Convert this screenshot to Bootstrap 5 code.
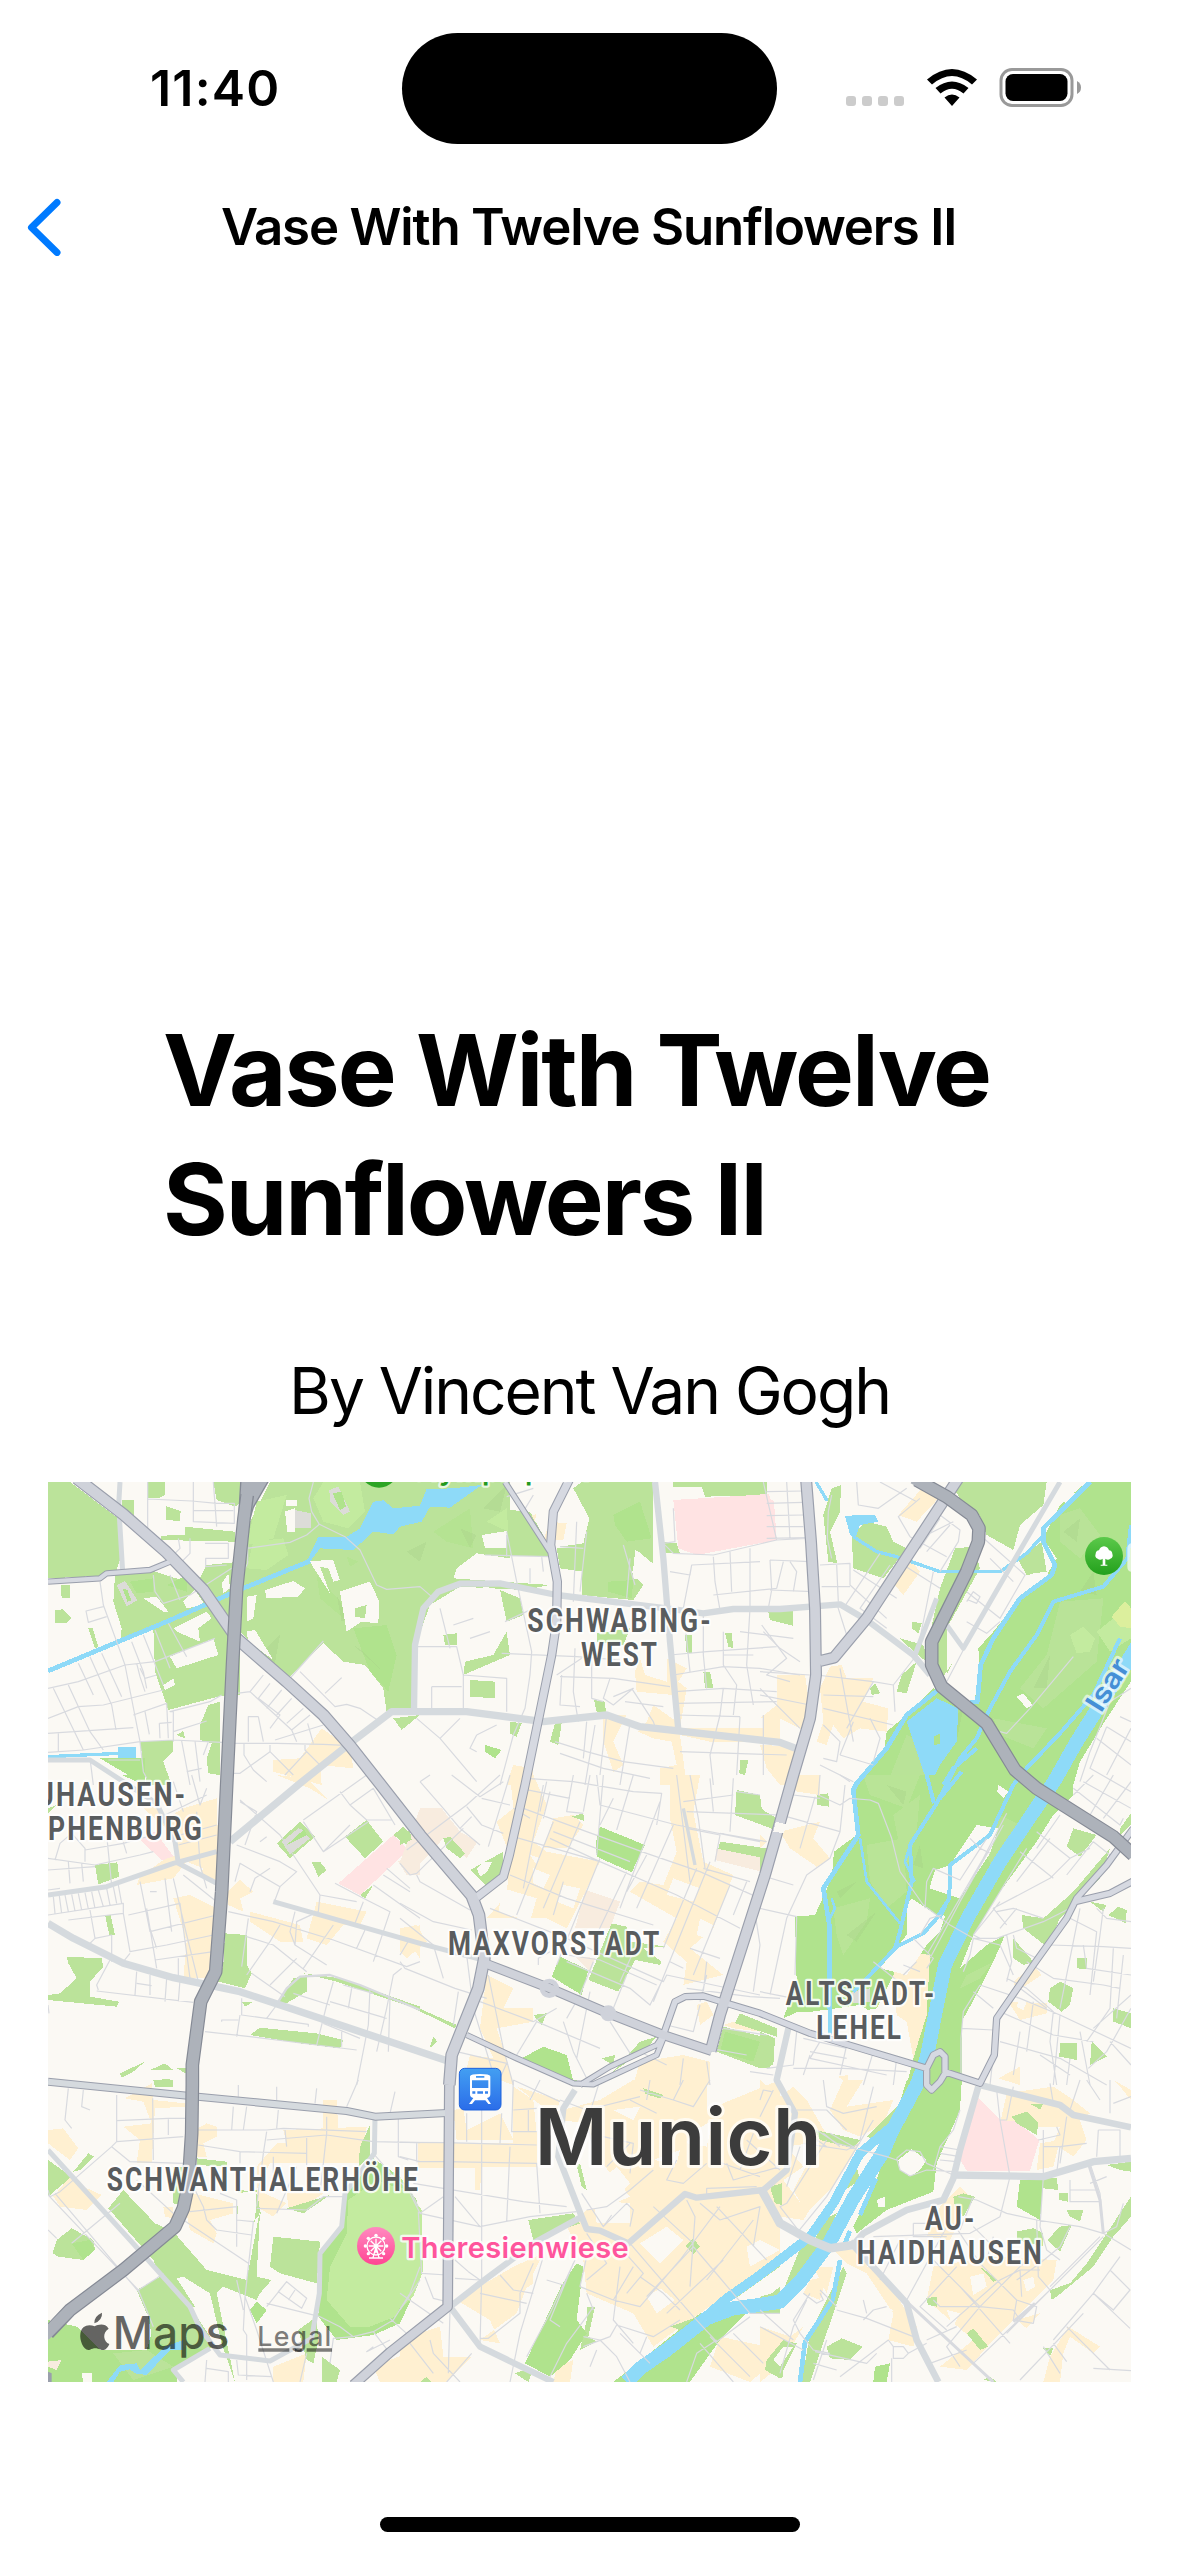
<!DOCTYPE html>
<html lang="en">
<head>
<meta charset="utf-8">
<meta name="viewport" content="width=device-width, initial-scale=1">
<title>Vase With Twelve Sunflowers II</title>
<link href="https://cdn.jsdelivr.net/npm/bootstrap@5.3.0/dist/css/bootstrap.min.css" rel="stylesheet">
<style>
body{font-family:Inter,"Liberation Sans",sans-serif;color:#000;background:#fff}
.screen{width:1179px;height:2556px;overflow:hidden}
.status{height:177px;padding:33px 98px 0 150px}
.clock{font-size:50px;line-height:60px;font-weight:600;letter-spacing:1.2px;width:252px;padding-top:25px}
.island{width:375px;height:111px;border-radius:56px;background:#000}
.status-icons{width:237px;margin-top:35px}
.topbar{height:99px;padding:0 27px}
.back-icon{margin-top:21px}
.topbar h1{font-size:51px;font-weight:600;line-height:60px;letter-spacing:-1.2px;margin:20px 0 0 160px;white-space:nowrap}
.hero{height:730px}
.headline{font-size:99px;font-weight:700;line-height:129px;letter-spacing:-2.1px;margin:0;padding-left:163px}
.byline{font-size:64px;font-weight:400;line-height:80px;letter-spacing:-2.05px;margin-top:87px;height:131px;white-space:nowrap}
.map{width:1083px;height:900px}
.home-bar{width:420px;height:15px;border-radius:8px;background:#000;margin-top:135px}
.area{shape-rendering:crispEdges;stroke:none}
.gr{fill:#bbe39a}.gb{fill:#b0e38d}.gl{fill:#c3eb9f}.ye{fill:#fff0d1}.pk{fill:#ffe3e3}.pe{fill:#f8ecdf}.wh{fill:#fbf9f4}.wt{fill:#8edaf8}.gy{fill:#dcdcd8}
.line{fill:none;stroke-linejoin:round}
.river{stroke:#8edaf8}
.minor{stroke:#d8dadf;stroke-width:3.6}
.sec{stroke:#d5dade}
.case{stroke:#9a9fac}
.prim{stroke:#cfd2da}
.light{stroke:#d6d9e1}
.mcase{stroke:#858a95}
.mway{stroke:#adb2ba}
.lbl{font-family:Roboto,"Liberation Sans",sans-serif;font-size:101px;font-weight:700;letter-spacing:8px;fill:#595c5e;stroke:#fff;stroke-opacity:.85;stroke-width:14px;paint-order:stroke;stroke-linejoin:round}
.inter{font-family:Inter,sans-serif;paint-order:stroke;stroke-linejoin:round}
</style>
<script src="https://cdn.jsdelivr.net/npm/bootstrap@5.3.0/dist/js/bootstrap.bundle.min.js"></script>
</head>
<body>
<main class="screen d-flex flex-column">
<header class="status d-flex align-items-start flex-shrink-0">
<div class="clock">11:40</div>
<div class="island flex-shrink-0"></div>
<svg class="status-icons ms-auto flex-shrink-0" height="42" viewBox="844 68 237 42">
<g fill="#ccc"><rect x="846" y="96" width="10" height="10" rx="3"/><rect x="862" y="96" width="10" height="10" rx="3"/><rect x="878" y="96" width="10" height="10" rx="3"/><rect x="894" y="96" width="10" height="10" rx="3"/></g>
<path d="M927 79.500Q952 58.500 977 79.500L972 84.500Q952 67.500 932 84.500ZM935.500 88Q952 75 968.500 88L963.500 93.500Q952 84 940.500 93.500ZM944.500 97.500Q952 91.500 959.500 97.500L952 106Z"/>
<rect x="1001" y="69.500" width="71" height="36" rx="11" fill="none" stroke="#999" stroke-width="3"/>
<rect x="1005.500" y="74" width="62" height="27" rx="7.500"/>
<path d="M1077 81Q1081 83 1081 87.500Q1081 92 1077 94Z" fill="#999"/>
</svg>
</header>
<nav class="topbar d-flex align-items-start flex-shrink-0">
<svg class="back-icon" width="34" height="58" viewBox="27 197 34 58"><path d="M57 201.500 31.500 226.500 57 251.500" fill="none" stroke="#007aff" stroke-width="7" stroke-linecap="round" stroke-linejoin="round"/></svg>
<h1>Vase With Twelve Sunflowers II</h1>
</nav>
<section class="hero flex-shrink-0"></section>
<h2 class="headline">Vase With Twelve<br>Sunflowers II</h2>
<p class="byline mb-0 text-center flex-shrink-0">By Vincent Van Gogh</p>
<svg class="map mx-auto flex-shrink-0" viewBox="24 21 3249 2700" role="img" aria-label="Map of Munich">
<defs><linearGradient id="gPark" x2="0" y2="1"><stop stop-color="#5bc94a"/><stop offset="1" stop-color="#23a01c"/></linearGradient><linearGradient id="gRail" x2="0" y2="1"><stop stop-color="#439ff2"/><stop offset="1" stop-color="#2b6de9"/></linearGradient><linearGradient id="gFair" x2="0" y2="1"><stop stop-color="#ff8ac0"/><stop offset="1" stop-color="#ff4593"/></linearGradient></defs>
<rect class="area wh" x="24" y="21" width="3249" height="2700"/>
<!-- north west -->
<g class="area">
<path class="gr" d="M24 21H90L245 138V240L225 300 24 310ZM323 21H375V60L355 70 323 68ZM245 75H282V120L245 95ZM378 93 422 108 420 138 378 135ZM520 21H600V85L585 95 530 75ZM435 155 585 170V200L360 195 365 182 435 180ZM62 330H90V370H65ZM46 405 70 403 95 430 80 445H46ZM145 460H158L175 515 165 520Z"/>
<path class="gr" d="M225 300 340 288 470 330 500 270 600 260 600 660 545 662 385 705 345 590 340 460 240 500 245 460 220 380ZM300 800 398 795 398 830 370 860 395 930H320ZM480 750 505 690 540 680V900L505 895 500 850 515 805 480 795ZM410 780 430 768 435 790Z"/>
<path class="gr" d="M600 470V200L690 21H1410V250L1310 235 1250 280 1240 310 1530 330 1450 345 1260 335 1170 390 1130 500V700L1040 710 1030 640 975 570 910 560 850 505 740 615Z"/>
<path class="gl" d="M850 21H960L975 110 925 160 850 140 820 70ZM620 280 640 200 730 190 745 240 680 285ZM650 80 740 60 700 190 620 210ZM1340 140 1400 100 1405 170Z"/>
<path class="gb" d="M940 460 1040 450 1070 540 1045 650 990 590ZM270 320 340 310 340 350 290 355ZM380 330 440 300 440 350ZM180 850 315 850V930Z"/>
<path class="gb" opacity=".6" d="M830 300 920 400 910 430 840 370ZM920 245 955 260 930 275ZM1180 170 1290 100 1300 220 1220 200Z"/>
<path fill="#a9cf8a" opacity=".35" d="M1260 160 1290 220 1310 180ZM890 360 925 430 905 440ZM1330 100 1400 30 1380 110ZM1100 230 1160 200 1140 260ZM940 510 1040 600 970 530ZM680 520 720 480 700 590Z"/>
<path class="wh" d="M545 325 565 295 570 340 550 355ZM675 345 760 318 795 340 775 365 680 370ZM620 365 650 360 640 430 620 440ZM620 470 645 465 700 555 625 500ZM808 258 880 255 900 315 880 320 865 280 840 275 870 355ZM900 350 990 320 1018 380 1015 445 965 440 920 470ZM310 370 350 365 385 410 370 410ZM430 380 465 345 495 390 440 400ZM400 460 500 410 515 430 475 460 480 500 410 470ZM390 545 520 490 535 540 410 580ZM370 630 400 610 405 630 375 645Z"/>
<path class="wh" d="M1325 180 1400 168V220L1335 220ZM1185 380 1240 370 1260 480 1280 550 1260 560 1225 500ZM1285 345 1345 335 1385 530 1320 550 1290 400ZM1135 590H1210L1260 630 1270 700H1135Z"/>
<path class="gr" d="M945 400 980 390 975 430 945 425ZM1210 480 1250 475V510L1215 510ZM1060 730 1140 720 1085 765Z"/>
<path class="gy" d="M868 45 895 35 930 110 910 120 870 80ZM230 330 255 318 292 375 260 395ZM765 105 812 115V160L765 160Z"/><path class="wh" d="M735 110 765 100V170L742 170ZM738 75H770V92H738Z"/><path class="gb" d="M878 55 905 50 918 95 900 105ZM248 340 262 345 275 378 262 380Z"/>
<path class="ye" d="M700 855 780 850 845 760 930 820 940 880 840 870 845 930 700 890Z"/>
</g>
<!-- north centre -->
<g class="area" transform="translate(1080)">
<path class="gr" d="M330 105 390 110 440 200 450 245 330 242ZM520 40 545 21H760V270L705 225 700 300 730 330 700 375 545 360 550 220 480 215 550 205 568 130ZM470 220H550V290L480 280ZM820 21H1100V60L915 65 905 35H820ZM790 200 830 205 840 235H790ZM300 345 360 370 370 420 320 440ZM350 105H330ZM320 470 330 540 190 600 195 560 280 540ZM210 615 285 620V670L210 665ZM330 740 365 745 350 785 330 775ZM465 745 485 745 475 810 450 800ZM582 675 615 680 618 715 590 710ZM855 480 875 480V535H860ZM975 475 995 475 1000 520 985 515ZM910 590 930 590 940 640 915 640ZM1020 855H1045L1035 900 1018 895ZM1105 410H1180L1180 440 1110 430ZM590 475 690 460 670 510 590 500Z"/>
<path class="gb" d="M640 120 720 80 755 190 680 200 645 150ZM625 320 700 315 695 370 625 350ZM255 810 305 825 285 850 255 830Z"/>
<path class="pk" d="M820 75 1095 58 1122 80 1130 195 890 240 835 220Z"/>
<path class="ye" d="M450 140 500 145 490 195 430 195ZM395 120 408 118 405 140ZM705 590 720 550 735 600 800 620 800 550 860 580 835 620 860 640 840 760 1140 760V800L930 800 840 780 860 930 780 930 780 880 830 870 815 800 760 790 715 770 740 740 760 690 830 740 820 660 710 650ZM610 720 680 720 640 800 670 870 640 890 610 800ZM340 870 400 880V930H320ZM1090 720 1140 700V770H1090Z"/>
<path class="wh" d="M697 290 710 225 770 275 745 320 700 310Z"/>
</g>
<!-- north east -->
<g class="area" transform="translate(2160)">
<path class="gr" d="M190 120 215 40 243 30 240 110 210 170 232 265 205 260ZM275 180 320 140 380 155 400 200 440 220 370 310 280 280ZM585 220 640 215 660 280 560 460 560 600 580 560 540 620 500 520 540 340ZM570 21H860L850 90 780 150 760 225 680 180 660 120 600 70ZM775 255 845 200 860 290 800 300ZM25 410 98 408V452L30 435ZM0 21H18V58H0ZM455 440 485 445 475 475 455 460ZM420 490 490 510 510 570 440 510ZM330 640 345 625 360 655 335 660ZM410 650 425 600 470 560 440 655Z"/>
<path class="gb" d="M980 21H1113V620L1040 730 960 860 940 930H280L370 840 380 770 440 720 520 640 640 690 660 600 655 520 700 470 780 370 860 300 890 250 850 190 900 90Z"/>
<path class="gr" opacity=".85" d="M900 120 960 100 1020 180 960 250 900 200ZM900 380 1030 370 1010 560 850 700 780 640 860 540ZM440 780 480 800 500 900 380 930ZM700 730 860 760 820 820 720 780Z"/>
<path class="gl" d="M930 480 970 455 1005 490 990 530 950 535ZM1010 470 1060 430 1113 450V490L1050 530Z"/><path fill="#dcef9d" d="M1055 425 1095 378 1113 400V460L1080 455Z"/>
<path fill="#a3ce84" opacity=".3" d="M910 170 960 130 950 200ZM820 640 870 540 860 640ZM560 750 610 700 590 800ZM960 350 1000 290 1010 360Z"/>
<path class="wh" d="M885 65 910 38 945 55 920 85ZM818 295 865 290V305H820ZM770 665 790 655 818 690 800 700Z"/>
<path class="pk" d="M0 58H28L45 195 0 205Z"/>
<path class="ye" d="M415 120 490 35 540 65 470 140ZM395 320 455 260 480 290 430 360ZM50 600 135 600 150 700 140 770 60 730 0 730 50 690ZM210 575 245 570 260 610 340 610 310 680 385 700 380 770 300 760 250 790 220 750 200 810 170 800 190 740 180 640ZM0 810 120 815 100 930 60 930 20 880Z"/>
<path class="wt" d="M255 122 345 120 355 140 300 150 285 195 270 180ZM440 740 530 670 595 700 590 800 540 870 510 930 490 890Z"/><path class="gb" d="M522 785 540 775V805L522 812Z"/>
</g>
<!-- west -->
<g class="area" transform="translate(0 900)">
<path class="gr" d="M165 270 232 262 237 305 175 328ZM195 420 212 420 225 480 208 480ZM80 545 185 550 190 575 150 620 150 665 237 680 230 695 24 675V660L60 655 110 610 85 565ZM555 475 620 480V570L635 595 615 640 535 620 550 570ZM710 205 780 140 825 185 750 250ZM815 260 840 260 860 285 835 305ZM915 185 980 135 1030 200 975 250ZM1060 180 1090 155 1118 185 1100 210ZM715 680 760 610 800 600V650L730 690ZM790 595 900 610 1140 695V705L890 620ZM630 780 660 758 830 775 910 795 900 820 780 805ZM240 895 315 860 280 890 245 908ZM330 885 375 865 400 885ZM340 915 390 912 400 930H345ZM410 880 437 878V895ZM605 680H640L615 695ZM24 100 50 90 24 115ZM960 360 1000 330 975 370Z"/>
<path class="gb" d="M740 200 790 160 805 185 755 220ZM245 0H320L290 20Z"/>
<path class="gy" d="M725 200 775 160 790 165 740 210 800 180 810 190 750 238Z"/>
<path class="pk" d="M300 195 345 170 405 250 365 255ZM895 325 1060 180 1105 225 960 360Z"/>
<path class="pe" d="M1075 260 1140 200V300H1100Z"/>
<path class="ye" d="M300 90 360 100 380 130 430 100 530 70 535 230 535 320 480 305 490 280 440 260 400 310 290 330 300 305 370 255 410 240 400 180ZM710 0 800 10 865 75 810 40ZM400 370 450 360 530 400 515 610 430 610 440 500ZM565 390V350L600 315 640 350 600 370 610 410ZM630 410 780 450 790 500 720 500 630 440ZM830 380 980 410 960 450 910 450 860 510 800 490ZM1090 480 1140 450V550Z"/>
</g>
<!-- centre -->
<g class="area" transform="translate(1080 900)">
<path class="pe" d="M0 260 60 100 125 100 180 170 232 200 200 250 130 190 30 300ZM555 345 660 380 630 460 525 460ZM950 220 1095 250 1085 290 945 255ZM520 540 585 550 570 590Z"/>
<path class="ye" d="M330 0H400L440 90 400 200 440 230 600 260 560 340 500 460 440 430 260 430 320 360 330 240 290 140 340 100ZM460 130 520 120 550 150 500 220 430 220ZM810 0 900 0 880 110 910 260 1000 300 940 460 870 520 970 600 850 630 860 560 790 500 830 430 690 350 720 320 790 330 830 230 810 130ZM0 460 50 450 80 500 20 550 0 530ZM260 600 340 640 310 700 400 700 400 740 290 760 320 850 340 930 200 880 210 840 280 850 240 760ZM890 690 920 680 940 720 900 750ZM720 860 850 840 930 860V930H700ZM970 750 1000 740 1080 770 1000 760Z"/>
<path class="wh" d="M310 340 410 370 390 440 295 410ZM400 280 450 300 430 340 400 325ZM490 330 540 340 520 400 470 380ZM820 310 900 340 880 380 800 360ZM900 430 940 450 920 490 890 480ZM590 270 640 290 620 330 580 310ZM390 240 420 250 410 270Z"/>
<path class="gr" d="M130 190 150 185 195 235 180 250 140 220ZM0 165 30 170 35 195 0 210ZM210 285 310 230 310 295 260 335ZM515 125 550 115 553 138ZM1010 45 1080 60 1085 100 1140 150V170L1005 120ZM960 200 1100 220 1095 250 955 222ZM635 445 680 455 690 500 800 515 730 520 785 560 780 570 705 555 655 650 565 615ZM0 675 170 750 165 760 0 680ZM400 720 440 715 425 750ZM88 820 100 785 112 800ZM720 800 770 785 740 820 640 890ZM605 850 645 840 640 870ZM1005 745 1020 715 1130 760 1130 785ZM950 830 970 755 1125 795 1110 880 1080 880Z"/>
<path class="gb" d="M588 200 600 155 735 210 695 292 590 245ZM480 545 565 585 545 660 455 605ZM365 850 430 815 500 840 520 920 470 905ZM975 770 1080 800 1060 860 960 830Z"/>
<path class="wh" d="M230 280 250 262 275 262 262 290 240 305Z"/>
</g>
<!-- east -->
<g class="area" transform="translate(2160 900)">
<path class="gb" d="M300 0H940V60L880 120 830 200 720 350 640 480 600 580 680 510 735 480 700 560 660 640 605 740 605 930H440L480 770 510 550 400 600 350 700 230 720 115 710 70 730 110 620 105 425 165 420 215 310 222 230 290 180 285 30Z"/>
<path class="gr" opacity=".8" d="M310 0H480L440 100 330 60ZM220 400 330 370 320 440 250 540 230 480ZM400 120 480 60 470 170 440 280 420 220ZM720 120 780 150 700 290 680 240ZM620 600 700 560 660 610 600 640ZM320 210 430 190 440 350 380 400 330 320Z"/>
<path fill="#a3ce84" opacity=".3" d="M230 350 290 320 240 370ZM460 270 480 210 490 280ZM260 480 350 410 290 500ZM380 30 440 50 430 90Z"/>
<path class="gr" d="M940 160 1010 180 960 245 920 215ZM785 420 850 430 940 350 1050 220 1020 310 900 430 860 515 790 460ZM1080 160 1113 115V150L1080 180ZM760 490 820 560 790 570 760 550ZM950 550H982V582L950 580ZM870 640 900 620 940 640 930 690 905 710 865 680ZM1060 700 1113 715V760L1060 740ZM900 805H950V855L898 845ZM990 870 995 800 1040 845ZM0 100 50 130 55 150 0 130ZM170 60 205 55 208 95 172 90ZM0 220H18V270L0 290ZM0 770 45 790 40 870 0 880ZM1045 420 1075 395 1100 405 1098 445ZM990 380 1040 390 1030 410Z"/>
<path class="ye" d="M70 0H180V60L110 50ZM60 170 180 140 160 190 210 250 170 275 90 220ZM400 600 430 530 510 540 500 720 460 850 440 740 410 720ZM760 620 820 570 845 600 770 650ZM745 680 860 685 860 715 780 735ZM715 910 780 875 780 930ZM235 905 265 900V930ZM0 220V180L20 200Z"/>
<path class="wh" d="M508 340 525 285 570 270 650 150 715 160 690 235 600 370ZM440 480V390L455 370 530 420 560 410 540 470 500 510 440 600 360 580ZM715 30 745 50 730 70 712 50Z"/>
<path class="wh" d="M120 715 300 690 400 750 440 840 430 900H130L70 730ZM780 665 800 680 790 705 770 695Z"/>
<path class="gb" d="M505 340 600 370 570 430 530 410Z"/>
<path class="gy" d="M275 650 330 640V680L280 685Z"/>
</g>
<!-- south west -->
<g class="area" transform="translate(0 1815)">
<path class="ye" d="M24 150 70 145 115 205 90 240 24 190ZM255 55 335 10 340 60 435 70V80L345 85 335 250 290 250 300 180 250 140 335 130 310 65ZM40 350 90 290 130 320 185 345 140 390 60 380ZM465 150 500 130 530 140 530 170 490 190 500 230 470 230ZM730 150 980 140 960 250 690 250 650 330 740 370 700 410 650 380 650 260 710 190 740 190ZM850 60 890 60 895 145H850ZM460 340 580 370 580 400 510 420 530 460 520 490 450 450 440 400ZM740 340 850 340 790 380 745 380ZM700 860 800 820 790 906H700ZM1000 860 1100 820 1140 800V906H1020ZM370 380 400 380 400 415 375 410Z"/>
<path class="gr" d="M24 240 95 290 24 350ZM100 275 145 220 162 230 120 270ZM205 385 250 330 345 430 400 455 500 570 620 600 660 390 650 330 595 340 590 420 640 425 665 400 660 395 650 590 695 600 660 640 650 660 550 620 530 640 585 906 545 790 510 640 430 590 410 595 465 680 320 700 290 630 360 590 340 540ZM400 260 470 260 440 380 400 370ZM470 235 560 245V260L470 255ZM595 330 650 335 645 425 592 420ZM960 200 990 135V230L955 260ZM700 470 840 485 830 610 720 580 690 560ZM340 0H400V20L345 22ZM38 520 50 480 95 445 160 480 165 510 130 540 55 530ZM740 385 870 345 790 400ZM775 750 830 710 835 780 820 850 800 840ZM845 830 900 870 890 906H845Z"/>
<path class="gb" d="M24 720 110 740 180 810 320 810 340 740 460 700 520 800 410 860V906H24ZM630 690 650 665 680 690 650 730ZM95 490 150 480 165 510 130 540Z"/>
<path class="gr" d="M320 690 450 680 510 770 500 810 340 790ZM220 820 320 810 400 860 280 900Z"/>
<path class="gb" d="M915 350 1000 235 1080 290 1130 360 1140 600 1080 730 1000 765 890 780 835 710 845 520 905 445Z"/><path class="gl" d="M925 360 1010 300 1090 330 1125 400 1130 580 1065 710 990 740 930 740 860 660 870 560 920 460Z"/>
<path class="wh" d="M125 880 155 880V906H130Z"/><path class="pe" d="M24 845 65 840 50 870 24 860Z"/>
<path class="wt" d="M200 906 240 855 290 850 300 870 375 800 430 780 430 810 390 810 320 885 285 880 270 868 240 875 220 906Z"/>
</g>
<!-- south centre -->
<g class="area" transform="translate(1080 1815)">
<path class="ye" d="M55 185 240 190 340 190 340 20 400 60 410 160 410 260H245L240 330H225V265H55ZM160 260 215 200 210 260ZM160 90 190 85 200 150 300 100 340 180 170 180ZM350 20 480 60 470 95 600 60 700 0H920V90L1140 0V540L1000 630 800 770 760 800 700 700 560 640 550 540 500 440 560 390 620 380 690 350 590 230 560 130 480 120ZM170 660 340 560 430 520 380 620 350 700 240 780 300 790 270 720ZM240 620 330 580 400 560V610L340 650 280 640ZM0 780 120 740 130 830 215 830 140 906H30L0 850ZM470 860 520 840 510 906H460ZM680 590 730 620 690 640ZM960 770 1100 800 1140 830 1050 906 930 860Z"/>
<path class="wh" d="M595 310 650 260 690 310 650 355 600 350ZM720 490 800 440 850 480 780 550ZM740 650 780 625 825 660 770 700ZM870 160 940 120 920 200 860 190ZM580 360 690 370 690 430 590 430ZM1040 500 1080 480 1140 510 1050 560ZM640 90 720 80 700 120ZM760 240 840 210 830 250Z"/>
<path class="gr" d="M385 420 520 400 500 370 540 430 400 480ZM530 255 540 250 560 330 545 320ZM730 25 790 45 780 55 735 42ZM858 498 880 475 900 500 880 522ZM560 680 585 680 565 770 590 785 540 810 560 720ZM1110 330 1140 310V380ZM810 740 880 715 840 750ZM345 880 375 870 395 880 385 906ZM60 906 80 890 95 906ZM1090 850 1140 790V820L1105 855 1140 880V890ZM500 0H530V15ZM1040 700 1140 620V700ZM1020 640 1140 540V560L1000 660Z"/>
<path class="gb" d="M375 850 485 615 530 550 550 560 530 720 560 760 510 840 450 890ZM640 906 900 700 1040 700 960 780 870 906Z"/>
<path class="gl" d="M0 320 30 340 65 390 70 570 40 650 0 690Z"/>
</g>
<!-- south east -->
<g class="area" transform="translate(2160 1815)">
<path class="ye" d="M0 0 60 50 100 20 140 60 180 130 210 180 80 200 130 260 70 300 130 380 200 310 130 420 60 410 0 330ZM210 90 250 0H310L260 80 400 60 370 130 300 170 250 150ZM180 180 300 190 220 320 140 400 100 330ZM880 20 940 60 990 100 960 120 980 180 940 230 880 190 900 140 830 140 720 130 740 40ZM840 190 900 180 880 260 830 270ZM1060 0 1113 30V60L1080 20ZM540 380 600 320 640 360 590 380 600 420 570 480 500 470ZM220 510 310 510 350 560 430 680 470 740 460 800 385 780 400 700 320 580 260 550ZM520 560 690 530 890 540 880 600 780 700 700 780 620 870 540 860 640 780 500 660ZM150 600 200 590 180 660 130 640ZM0 740 90 770 130 740 60 860 0 906ZM925 740 1020 800 1000 820 930 770 910 820 900 906 850 906 870 830ZM160 560 220 560 200 640ZM770 720 840 700 800 745Z"/>
<path class="wh" d="M630 590 670 580 680 620 640 645ZM790 600 820 590 825 620 800 635ZM560 690 600 700 580 740ZM320 560 400 500 470 540 430 600ZM370 680 400 690 380 720Z"/>
<path class="pk" d="M655 55 720 120 770 125 838 180 810 272 620 272 595 230Z"/>
<path class="gb" d="M440 0H605L600 90 530 250 520 335 380 390 290 460 280 440 350 300 400 130ZM780 300 850 300 840 420 770 380ZM345 860 390 850 380 906H340Z"/>
<path class="gr" d="M850 295 890 295 895 330 850 325ZM897 340H925V365L897 360ZM920 390 970 390 960 425 930 410ZM580 350 610 340 645 350 610 410 585 380ZM770 455 820 445 850 460V500L770 480ZM862 480 900 440 935 435 900 515ZM755 110 800 95 835 130 830 165 770 130ZM810 72 850 72 840 88ZM1040 255 1113 245V275L1080 270ZM1113 350V410L1060 470 1000 560 890 650 875 660 870 630 930 610 980 550 1040 460ZM1025 470ZM655 555 712 600 700 605ZM497 655 530 650 530 680 505 675ZM620 760 640 745 685 800 660 810ZM850 805 880 805 870 828ZM200 800 245 775 308 800 270 840 210 835ZM670 900 690 890 710 906ZM165 150 300 180 280 205 180 180ZM320 170 430 60 440 80 350 180ZM130 480 210 500 110 630 0 680V650L70 630ZM250 560 260 580 220 700 150 906H125L150 760ZM30 320 65 310V375L45 370ZM20 840 70 780 110 790 70 870 70 890 60 895 15 870ZM190 420 230 400 180 500 160 490ZM260 280 290 260 300 300 240 340Z"/>
<path class="wh" d="M415 240 455 208 500 240 480 270 450 290 420 270ZM300 230 350 210 340 260 300 280ZM350 360 375 350 375 380 355 380ZM40 840 70 800 100 800 60 860Z"/>
</g>
<!-- waterways -->
<g class="line river" shape-rendering="crispEdges">
<path stroke-width="14" d="M24 588 230 502 380 440 590 348 810 258"/>
<path class="wt" stroke="none" d="M800 260 835 185 920 185 960 160 1000 80 1030 76 1060 100 1140 92 1160 42 1240 40 1325 30 1230 98 1170 95 1145 140 1080 155 1060 178 1000 170 940 225 880 222 840 220 812 258Z"/>
<path stroke-width="10" d="M24 845 240 835"/><path class="wt" stroke="none" d="M235 815H288V850H235Z"/>
<path stroke-width="10" d="M2328 21 2362 78M2440 185 2510 230 2570 245 2700 290 2880 290 2960 235 3010 180"/>
<path stroke-width="14" d="M3150 21 3010 160 3010 200 3045 270 3035 300 2940 370 2860 490 2822 570 2812 680 2780 685 2700 640 2600 720 2540 820 2450 925 2440 945 2455 1080 2350 1240 2368 1350 2370 1680"/>
<path stroke-width="12" d="M3273 150 3262 250 3190 335 3040 380 2990 480 2910 590 2850 700 2810 790 2760 850 2690 985 2610 1110 2615 1220 2580 1370 2565 1420M2765 890 2700 970M2660 900 2682 985M2810 820 2740 880 2710 930"/>
<path stroke-width="8" d="M2460 1090 2480 1220 2580 1345M2375 1270 2385 1300 2370 1330M2610 1110 2595 1160 2625 1220M2728 1270 2700 1330"/>
<path stroke-width="12" d="M3240 490 3160 660 3060 775 2950 890 2920 930 2850 1080 2730 1170 2728 1270 2690 1330 2650 1375 2570 1415 2490 1500 2440 1550"/>
<path stroke-width="42" d="M3290 515 3110 800 3045 915 2880 1160 2785 1325 2715 1470 2685 1620 2660 1750 2630 1830 2555 1970 2530 2030 2440 2170 2370 2300 2280 2420 2220 2480 2160 2490 2080 2500 2000 2530 1880 2625 1800 2680 1760 2721"/>
<path stroke-width="28" d="M2560 1950 2460 2035 2380 2185 2310 2285 2160 2400 2060 2470 1980 2540"/>
<path stroke-width="14" d="M2508 2110 2460 2220M2430 2268 2415 2305M2400 2355 2378 2475 2295 2600 2280 2721"/>
</g>
<!-- side streets -->
<g class="line minor">
<path d="M323 21V160M323 72 455 78 530 85 583 85V145L460 140V21M460 107H580M520 21 530 155M415 190 420 220 400 240M450 190 450 235 420 265M495 205H565V250H497V275L560 270M620 220 750 202 800 180 838 148 915 185 960 225 1010 330 1040 343 1140 335 1175 365M838 148 815 110 807 70 820 21M623 210V265L600 310M340 300 345 350 370 385 450 360 575 280M390 300 420 375M180 320 190 390 230 500 255 570 300 800M190 395 138 408 145 442 200 425M310 480 370 630M275 500 310 590 320 640M345 465 390 580M385 445 440 545M24 640 115 620 255 570 345 560 525 490M24 730 115 695 190 690 370 645M40 640 130 825M85 630 150 770 190 825M115 565 160 660M150 545 215 690 228 765M185 535 245 665M24 775 280 758M55 775V830M24 832 130 825 300 800 400 795 560 803M300 580 315 610 350 600M290 565 300 605 315 650M280 720 380 685 385 790M315 710 328 778M545 660 510 680 390 710H400V800M358 745 360 790M358 745 395 742M400 770 500 738M425 798 450 930M465 798 480 920M505 800 490 840M440 890 485 880M150 850 160 930M300 800 310 890 320 910M205 855H300"/>
<path d="M850 498 745 615M855 655 905 608M780 590 885 695 920 688 960 700 1020 740M670 600 630 650 590 655M630 650 690 705 755 765 770 800M690 625 655 670 720 720 690 760M725 645 680 700M755 670 710 720M790 700 740 745M810 720 755 765M850 750 705 795M585 805 710 805 850 808 930 812M655 725H625V800M655 725 670 800M803 745 820 805M612 805V840L640 885 680 920M690 810V830L600 895 580 895M690 830 760 900M795 810V825L850 880M735 900 800 830"/>
<path d="M1400 170 1430 320 1475 530 1470 600 1455 700 1420 780 1380 930M1335 240 1530 245M1395 440 1480 400M1385 535 1610 545 1740 555M1400 65 1480 40M1450 110 1480 60M1400 245V180M1470 280V325M1505 245 1510 290M1560 215 1630 220M1610 140 1600 380M1640 170 1620 350M1605 520 1600 650 1615 740M1655 550V670L1690 680M1560 605 1720 610 1890 635M1710 610 1690 670 1720 690 1780 640 1720 665M1775 640 1840 740 1850 770M1755 680 1870 695M1565 600 1560 690 1620 695M1545 800 1640 830 1750 860 1900 880M1560 835 1690 880 1830 910M1640 740 1630 850M1665 750 1635 930M1700 720 1680 900M1770 745 1740 930M1240 450 1300 430M1290 490 1350 470M1200 400 1230 520M1125 515H1250L1270 600V700M1130 730 1200 790 1310 920M1200 790 1260 730M1310 780 1370 750M1310 780 1290 820 1310 830M1270 600 1400 610V710M1175 635H1265M1175 635V700M1625 550 1550 600M1785 330 1750 210M1760 370 1770 250"/>
<path d="M1900 100 1905 200 1870 205 1900 235 2020 240 2210 195M2170 21 2210 195 2300 190M2020 245 2025 320 2040 405M2070 230 2075 350M2130 220V400L2120 570 2140 690M1890 290 1950 300 1955 270 2160 260M1955 270 1930 400M2020 360 2210 340M1890 540 2000 530 2210 515M1930 400 1950 590M1990 420V540L2000 640M2050 470V570L2090 630 2080 720M1900 600 2050 575 2160 580 2280 600M1905 650 2050 640 2210 650M1910 685 2210 680M1910 720 2100 725M2100 725 2090 900M1920 830 2240 840M2050 640 2040 720 2010 840 2020 930M2170 720V900M2050 540H2140M2165 450 2240 550 2180 600 2250 620M2100 470 2260 490M2180 50 2290 48M2180 85 2290 82M2180 122 2290 120M2180 155 2290 155M2180 190 2300 188M2190 255 2310 260M2190 345 2320 350M2190 255 2195 345 2185 400M2230 260 2210 340M2250 260 2270 290 2260 350M2240 21 2250 190M2340 270 2430 265V330L2540 430M2390 270 2395 380M2345 335H2430M2390 385 2420 480M2440 285 2570 370M2520 235 2410 400"/>
<path d="M2450 21 2455 90 2515 100 2600 40M2520 21 2630 80M2610 185 2575 125 2640 70M2610 185 2720 245M2700 120 2760 165 2755 200 2700 290M2660 180 2740 140M2660 230 2730 150M2700 130 2640 220M2820 180 2955 300 2880 430 2780 350M2850 250 2920 320M2780 380 2800 350 2820 365 2810 385 2785 375M2780 440 2840 475 2880 440M2770 525 2720 620M2680 290 2630 540 2560 630 2565 710M2550 270 2460 400 2540 460M2590 270 2700 340M2330 600 2500 620 2560 630M2350 660 2500 665M2400 580 2440 800M2500 620 2420 760M2160 660 2310 690M2160 590 2310 600M2170 470 2220 520 2280 560M2350 700 2560 750M2350 750 2400 800 2390 860 2350 850M2160 640 2280 760M2490 730 2520 790 2500 860M2400 840 2500 870M2440 740 2400 840M3100 545 2970 700 2900 775 2880 770M2340 870 2440 920M2375 250 2362 190 2365 110 2375 60"/>
<path d="M3273 640 3210 680 3150 830 3120 920M3200 755 3273 800M3170 790 3273 870M3273 760 3200 900M3240 725 3273 740M3200 755 3150 880 3273 950"/>
</g>
<g class="line minor" transform="translate(0 900)">
<path d="M45 255 60 205 95 175M24 250 165 270 300 240 340 230M24 285 165 275M85 260 90 325M125 265 130 320M95 175 135 220V260M135 225 250 205 340 180M200 180 215 330M240 170 260 235M24 345 60 340M24 420 250 385V415L85 435M40 365 45 415M58 363 65 415M75 360 85 410M95 358 105 408M115 355 125 405M135 353 145 402M155 350 165 400M175 345 190 395M200 340 210 390M220 335 230 385M235 330 245 385M150 405 165 490 215 480V560M165 490 145 510M175 645 170 630 210 555M170 648 460 682M250 415 270 530 380 510 520 480M265 420 420 385 450 610M320 400 350 580M300 320 330 470 530 420M375 310 395 470M400 310 440 480 475 620M430 300 530 380M350 350H330M330 460 350 520M345 555 520 530M270 535 250 560M290 590 285 660M330 600V660M290 625 335 632M380 610 375 680M420 615 415 680M415 550V600M455 0 480 90 500 40M400 20 430 110M375 120 500 60M420 180 530 150M415 210 530 180M470 110 480 270 500 340M24 690 27 715M565 410 700 440 880 495 1100 575 1140 560M590 210 720 260 770 290 720 335 600 265 585 320M720 335 705 375M630 350 645 310 690 280M600 75 720 180 840 360 950 380M600 80 650 110 615 210M660 200 680 185M790 140 850 230 985 140M790 135 980 0M885 325 970 370 1050 410 1000 560M840 360 835 410 770 440 765 510 860 570M930 90 980 135 1055 135M900 50 930 90 1000 40 1065 150M1000 330 1140 430M1030 300 1110 350M930 150 850 230M1040 280 1110 340M970 380 945 445M880 450 790 580M950 520 975 465M720 450 690 500 620 600M625 430 605 575M765 410 750 470 765 510M620 485 700 510 800 590M635 595 735 665M690 630 770 550M1085 580 1060 600 1040 700 1010 830M990 640 985 750 950 930M880 620 860 690 830 810M760 655 870 690M935 640 925 700M870 680 1040 730M910 630 1000 655M605 670V720L805 748V755M600 720 590 785M545 740V735L595 735M495 770 630 785 830 810 950 825M680 730 710 690M850 745 960 790M905 770V815M1050 670 1045 830"/>
<path d="M715 680 740 640 780 605 870 600 960 630 1140 705" stroke-width="7"/>
</g>
<g class="line minor" transform="translate(1080 900)">
<path d="M60 20 130 100 180 160 240 210M60 20 90 0M155 0 240 65 310 20M20 225 200 90 300 0M200 95 245 150 310 175M180 160 215 125M0 265 30 300 50 295 80 265 190 160M245 70 330 90M330 0 265 215M50 300 60 320 210 405M0 385 100 440 215 465M0 430 100 510 130 610M0 560 15 580 165 640 260 670M0 540 30 490M175 650 160 750M360 40 510 70M380 10 520 20 700 50 785 55 770 150M370 100 560 170 740 235 900 290 1080 370M340 185 600 260 830 360 1020 460M330 300 500 370 760 450M270 400 500 490 790 620 800 600 1080 660M450 50 430 130M440 20 420 110M520 0 500 110 550 115M570 0 550 110M610 0 590 240M700 0 650 165M640 70 600 150M460 140 350 420M540 140 430 400M600 250 470 570M680 290 580 500M780 80 720 240 660 400M740 240 680 350M820 150 710 400M890 280 790 520M930 260 760 680M990 330 880 600M830 0 870 320M870 0 895 130 915 280M910 280 1050 320M460 170 690 260M450 190 600 260M490 320 460 420M430 30 370 340M340 100 390 130M590 0 600 90 830 150 1080 200M850 80 1000 60M930 10 940 110M860 110 1140 120M1000 10 990 170M860 160 960 180 945 260M960 175 1100 200M1010 50 1080 60M1040 320 1000 420M415 570V550L450 530M500 560 690 640 750 690 780 630M500 540 600 555 770 630M680 600 640 700M580 560 540 660M700 530 660 620M920 560 910 650M900 680 920 600M860 640 1050 665 1140 670M1060 380 1080 510 1060 650M870 520 960 550M810 560 850 580M200 540 220 700 290 930M265 600 310 820 340 930M240 680 400 740M400 740 470 700M350 840 410 740 600 820M490 740 520 830 570 930M570 650 530 850M630 740 700 850M170 830 320 865 300 910M540 660 500 730M660 740 770 770M800 750 880 770 900 690M930 820 1040 840M970 760 1100 780M1050 890 1120 900M920 860 930 930M850 850 840 930M720 830 800 870"/>
</g>
<g class="line minor" transform="translate(2160 900)">
<path d="M180 0 175 60 240 90 270 70 330 75 355 85 395 190 420 290 490 390 570 450 640 490 710 490 850 440 950 390M255 30 240 170 210 250 140 300 80 430 30 660M240 0 270 20M80 125 240 170M165 65 120 220M100 60 180 70M0 300 100 330M0 400 110 425M110 425 105 600M0 650 100 670M740 115 670 250 500 540M730 150 600 380 510 550M630 190 660 220 690 235M480 480 510 430 545 420M495 400 500 320 520 280 600 315 680 190M460 490 520 550 500 580M430 570 480 590M340 560 440 640M430 600 470 560M720 380 640 480 660 490M640 480 800 220M780 230 880 310M830 170 930 250 870 310 700 400 740 450M870 190 770 320M900 120 830 220M710 410 760 400 850 430M770 400 720 460M640 490 630 540 610 590M640 490 720 510 760 600M760 480 770 520 830 550M1000 0 940 60M1060 0 990 120M1113 20 1030 130M940 40 1080 150 1090 130M970 20 1113 100M1000 200 920 300M1000 200 1050 240M930 250 990 220M660 630 610 710 603 790V900M660 630 780 670 900 720 1113 820M640 650 700 700M740 480 755 560 740 620M605 760 700 765M740 610 800 640 880 710 870 800 890 930M800 560 880 610 1030 630 1080 640M870 510 1030 515 1113 520M1010 400 1040 430 1113 440M930 430 1010 470 990 660M1030 400 1020 480 1000 620M960 400 940 500 900 700M970 510 980 580 1113 600M1060 520 1050 700 980 800M1090 540 1070 730M720 710 880 780 1000 800M720 800 900 850 1040 930M780 770 760 900M820 680 800 830M900 720 880 930M960 770 990 930M1113 660 1000 760M1113 700 1040 830 985 880M1050 800 1113 870M830 570 780 640 860 700M840 840 930 900M930 850 920 930M700 840 690 930"/>
<path d="M110 770 100 870 20 880M130 790 260 820M150 830 260 850M150 840 130 900M260 810 240 900M340 830 310 930M180 800 150 850 380 900M410 850 400 930M100 880 250 880 440 890"/>
</g>
<g class="line minor" transform="translate(0 1815)">
<path d="M85 25 75 120 95 145M130 30 125 80 150 90M230 45V185M230 122 385 115 440 115M385 118V165M230 185 430 170M338 55 340 240M230 185 215 200 270 245 430 250M215 200 60 335 30 350 24 330M45 340 300 640M24 345 295 630 350 595 370 580M295 630 340 740M595 15V50M710 20V60M830 25 825 70M955 0 920 80M1065 35 1050 100M580 80 575 150M620 80 610 150M715 90 710 145M470 150 680 150 730 145 980 155M475 195 600 215 800 220M680 155 670 220 650 380M800 170 800 260M860 110 860 160 840 340M735 150 740 200M680 180 860 165 1000 185M600 215V250M700 230V280M770 260 710 400M465 330 490 380 500 420 530 450 635 465M540 340 590 360 590 500M450 395 590 380M590 420 640 425 615 650 650 750 700 906M430 420 625 550M650 385 800 390 850 350 910 350M290 300 400 400M240 370 95 490M24 450 50 475M715 635 740 605 800 655 785 685ZM765 630 745 660M680 670 840 710 900 740 940 770 880 775 870 850M740 605 680 680M615 650 610 750 620 765V900M590 600 610 690M500 840 495 906M500 865 565 875V906M590 840 595 885 695 890M800 820 780 906M1000 755 1050 820M1050 715 1110 770M940 770 1000 755 1060 720 1110 640 1140 560M1000 800 980 815 1050 780M1075 110V230L1105 240M1000 185 1140 188M1000 220 1060 290 1110 330 1135 380"/>
</g>
<g class="line minor" transform="translate(1080 1815)">
<path d="M0 187 140 188 410 195M50 190V245L140 245 410 250 420 400M0 230 60 245M200 100V185M245 60V590L240 800M305 100 300 190M340 90 410 85M340 0 335 155 410 155M385 90V155M40 310 130 325 370 365 500 380M330 200 320 425M30 340 60 400 130 350M60 400 240 440 390 410 530 395M165 350 240 440M55 395 65 580 140 585M165 540 205 575 240 600M165 595 240 600M75 590 100 655 140 665M60 600 0 690M240 640 380 670M300 585 340 630 400 640M400 550 360 640 360 700 265 775 240 775M430 530 360 760 330 906M520 550 450 720 480 740M440 600 490 615M525 540 450 700 380 830M450 890 500 790 560 710 580 680M550 770 600 780 650 830 690 906M550 800 630 770 650 735 760 770 840 720M150 690 145 880M0 640 130 730M90 780 100 820 180 906M215 820 140 906M30 790 100 880M340 0 480 65M420 0 390 60M480 60 560 90 720 50M600 0 560 130 590 240M750 0 740 60M850 0 820 60 720 30M820 60 880 80 930 0M690 60 770 100M610 170 700 190 690 280M690 190 620 260M830 240 800 300 850 310 920 250M920 350V325L1070 320M940 240 1080 290M980 250 1000 300 1140 260M1040 180 1140 270M1060 160 1020 270M545 340 610 440 635 405M610 440 680 370 700 390 690 440M560 390 620 380 690 330 760 270M690 490 750 560 880 710 950 785M700 560 640 660 540 620 560 530M650 490 730 580 680 640M720 590 790 640 840 690M560 600 620 550 560 460M660 560 640 720 700 790M560 640 580 690M640 660 720 680 840 540 960 380M860 360 885 410 870 620M900 370 960 420 1080 380 1060 500M880 500 940 570 1050 700 1140 700M880 490 760 380M880 500 740 650M950 380 1100 540M970 540 800 700M1060 420 920 600M900 790 1000 906M930 770 1050 890M950 785 1050 710M1000 760 1090 850M950 780 890 820 860 906M660 760 750 850M590 810 570 860M740 770 720 820"/>
</g>
<g class="line minor" transform="translate(2160 1815)">
<path d="M40 30 0 110M35 35 10 30 0 60M110 90H200L260 150M190 0 200 80 250 100 350 80M100 130 200 200M120 200 80 320M130 190 260 210 300 190M170 150 230 190 380 230 410 240M190 160 240 200M210 160 280 200M340 20 300 180M410 235 440 210 480 215 500 250 580 285M410 235 420 270 450 288 500 270 580 275M540 200 600 210M540 220 600 230M540 240 590 245M600 90 580 150 540 200 520 270M340 120 200 350 110 460M200 180 80 370 60 380 130 470M710 30 720 120 750 290M720 120H740L760 20M835 180 900 165 890 140M850 150V290M850 200H900L890 280M900 200 980 190M920 110 900 250M1015 150 1010 230M1015 150 1080 150V230M880 70 870 10M930 90 960 0M1050 0V100M1113 50 1060 70M980 0 1020 60M640 350 600 450M595 350 650 360 740 400 830 420 960 440 1030 460M750 290 720 410 630 460 340 470M850 290 840 440 860 510 900 540M830 420 835 590 870 630M990 250 1020 340 1030 460 1113 510M1020 365H930V300M1040 290 990 310M930 330H1015M1090 370 1070 440 1030 460M640 440 720 520M420 480 360 600M560 440 440 660M580 430 660 550 770 660 830 680 820 730 760 720 770 660M660 680H540L520 660M660 680 800 540M660 680 760 690 780 720M600 620 750 790M560 740 720 600 780 570 840 570M780 570 785 650M590 560 480 680 560 750M520 540 660 680 560 800 600 860M500 780 590 740M510 850 620 810M230 690 320 715 460 770M180 630 230 680M310 720 340 690 380 680M320 700 310 660M385 780 240 890M385 780 400 800H430L445 820 430 835H400V800M445 820 500 790M395 835V906M160 850 230 870M165 815 320 850 350 820M200 780 160 900M140 660 100 740 60 880M150 640 100 720 120 760 160 810 210 820M130 640 170 670 190 660 180 640M0 740 130 810M0 690 100 780M1020 470 870 620M1030 470 740 760M870 630 640 850M1050 570 1110 630 1060 690 1000 640 1080 530M1000 640 880 780M1000 640 1110 745M970 700 780 900M920 740 1050 870M1000 865 1113 872M850 800 900 880M880 790 920 845M460 430H500M460 430V470L560 470M700 470 680 540M770 600 840 550 900 500 930 440"/>
<path d="M440 665 700 906M1030 460 1020 360 985 250M825 670 760 725" stroke-width="9"/>
</g>
<!-- secondary roads -->
<g class="line sec">
<path stroke-width="22" d="M570 1100 780 925 930 805 1055 710H1280L1510 740 1700 720 1800 755 2220 802 2280 825M24 1345 100 1390 250 1465 400 1508 600 1550 750 1600 1140 1730 1230 1760M2740 2100 3010 2105 3160 2060 3273 2050"/>
<path stroke-width="19" d="M1122 705 1125 510 1150 400 1195 350 1260 326 1380 325 1550 360 1880 400 1990 415 2080 402 2220 402 2400 388 2480 435 2620 540 2670 600M1845 21 1870 250 1890 500 1915 765M1605 1845 1570 1900 1555 2045 1625 2225 1640 2262 1680 2267 1765 2305 1935 2157 1970 2168 2170 2145 2240 2085 2265 1915 2210 1815 2245 1660M1625 2225 1480 2305 1320 2425 1230 2495 1320 2615 1540 2721"/>
<path stroke-width="26" d="M2165 2145 2220 2245 2310 2295 2370 2320 2440 2310"/>
<path stroke-width="20" d="M2430 2300 2600 2485 2630 2595 2695 2721M2440 2310 2470 2275 2600 2205 2710 2175 2740 2110 2760 2025 2815 1835M2820 1830 3060 1890 3100 1920 3273 1957"/>
<path stroke-width="15" d="M3060 21 2920 260 2770 520 2720 450M2690 370 2625 540M24 1260 200 1235 400 1165 530 1130M24 855H150L350 985 405 1100 415 1165 530 1225M700 1280 1140 1405 1330 1455M240 21 236 90 248 290M1005 1930 1003 2035 915 2155 905 2255 840 2335 838 2455 815 2590 690 2658 540 2640 480 2560 450 2495 360 2395 270 2295 24 2025M510 2620 400 2685 430 2721"/>
<path stroke-width="10" d="M1930 1000 1965 1170"/>
</g>
<!-- cased main roads -->
<g class="line case">
<path stroke-width="24" d="M24 1820 450 1863 920 1908 1005 1925 1220 1914"/>
<path stroke-width="38" d="M110 10 250 118 380 232 490 345 590 490 740 620 850 720 930 812 1015 920 1140 1080 1295 1262 1317 1320 1333 1450 1315 1540 1235 1740 1228 1830"/>
<path stroke-width="32" d="M1228 1830 1223 2495 1050 2632 940 2730"/>
<path stroke-width="28" d="M1590 10 1540 110 1532 210 1552 320 1550 440 1535 540 1490 760 1455 930 1408 1140 1390 1205 1310 1267"/>
<path stroke-width="19" d="M1395 21 1530 230M24 320 180 310 200 295 330 285 390 260"/>
<path stroke-width="36" d="M2298 10 2313 200 2325 400 2328 600 2310 730 2260 900 2215 1060 2175 1200 2040 1620 2012 1728M2755 10 2480 430 2382 548 2340 558"/>
<path stroke-width="30" d="M1335 1465 1530 1540 1705 1615 1870 1680 2015 1728"/>
<path stroke-width="22" d="M1870 1680 1905 1580 1935 1565 1990 1563 2060 1585 2160 1615 2310 1675 2660 1780 2680 1740 2700 1730 2715 1745V1790L2820 1825 2863 1740 2870 1630 2980 1470 3080 1330 3110 1270 3200 1170 3280 1060M3105 1280 3210 1255 3280 1218M2660 1780V1830L2675 1845 2700 1820 2715 1795"/>
<path stroke-width="19" d="M1280 1680 1430 1750 1600 1825 1660 1828 1850 1740 1870 1690M1620 1830 1710 1775 1850 1710 1870 1680"/>
<circle cx="1528" cy="1540" r="25"/><circle cx="1705" cy="1615" r="20"/>
</g>
<g class="line light"><path class="sec" stroke-width="18" d="M24 1820 450 1863 920 1908 1005 1925 1220 1914"/><path stroke-width="22" d="M1590 10 1540 110 1532 210 1552 320 1550 440 1535 540 1490 760 1455 930 1408 1140 1390 1205 1310 1267"/><path stroke-width="13" d="M1395 21 1530 230M24 320 180 310 200 295 330 285 390 260M1280 1680 1430 1750 1600 1825 1660 1828 1850 1740 1870 1690M1620 1830 1710 1775 1850 1710 1870 1680"/><path stroke-width="16" d="M1870 1680 1905 1580 1935 1565 1990 1563 2060 1585 2160 1615 2310 1675 2660 1780 2680 1740 2700 1730 2715 1745V1790L2820 1825 2863 1740 2870 1630 2980 1470 3080 1330 3110 1270 3200 1170 3280 1060M3105 1280 3210 1255 3280 1218M2660 1780V1830L2675 1845 2700 1820 2715 1795"/></g>
<g class="line prim"><path stroke-width="31" d="M110 10 250 118 380 232 490 345 590 490 740 620 850 720 930 812 1015 920 1140 1080 1295 1262 1317 1320 1333 1450 1315 1540 1235 1740 1228 1830"/><path stroke-width="25" d="M1228 1830 1223 2495 1050 2632 940 2730"/><path stroke-width="29" d="M2298 10 2313 200 2325 400 2328 600 2310 730 2260 900 2215 1060 2175 1200 2040 1620 2012 1728M2755 10 2480 430 2382 548 2340 558"/><path stroke-width="24" d="M1335 1465 1530 1540 1705 1615 1870 1680 2015 1728"/><circle cx="1528" cy="1540" r="22" stroke-width="14"/><circle cx="1705" cy="1615" r="16" stroke-width="16"/></g>
<g class="area"><path class="wh" d="M2208 1040 2238 1048 2232 1075 2200 1070Z"/></g>
<!-- ring road -->
<path fill="#adb2ba" stroke="#858a95" stroke-width="4" d="M603 10H690L640 97 612 190 592 190Z"/>
<g class="line mcase" stroke-width="41"><path d="M622 60 612 130 590 340 578 560 560 930 545 1250 527 1490 482 1580 457 1770V1830L455 1975 445 2130 430 2200 405 2255 250 2385 90 2505 24 2575M2630 15 2720 65 2795 120 2817 160 2815 200 2780 290 2675 500V570L2705 635 2840 745 2925 885 2990 940 3220 1085 3280 1140"/></g>
<g class="line mway" stroke-width="34"><path d="M624 40 612 130 590 340 578 560 560 930 545 1250 527 1490 482 1580 457 1770V1830L455 1975 445 2130 430 2200 405 2255 250 2385 90 2505 14 2582M2620 10 2720 65 2795 120 2817 160 2815 200 2780 290 2675 500V570L2705 635 2840 745 2925 885 2990 940 3220 1085 3280 1140"/></g>
<path d="M24 2690 35 2695V2721H24Z" fill="#9a9fac"/>
<!-- labels -->
<g class="lbl">
<text x="1462" y="470" textLength="556" lengthAdjust="spacingAndGlyphs">SCHWABING-</text>
<text x="1623" y="572" textLength="234" lengthAdjust="spacingAndGlyphs">WEST</text>
<text x="-12" y="992" textLength="454" lengthAdjust="spacingAndGlyphs">UHAUSEN-</text>
<text x="24" y="1095" textLength="468" lengthAdjust="spacingAndGlyphs">PHENBURG</text>
<text x="1224" y="1440" textLength="640" lengthAdjust="spacingAndGlyphs">MAXVORSTADT</text>
<text x="2237" y="1590" textLength="452" lengthAdjust="spacingAndGlyphs">ALTSTADT-</text>
<text x="2329" y="1693" textLength="260" lengthAdjust="spacingAndGlyphs">LEHEL</text>
<text x="200" y="2147" textLength="940" lengthAdjust="spacingAndGlyphs">SCHWANTHALERHÖHE</text>
<text x="2655" y="2265" textLength="154" lengthAdjust="spacingAndGlyphs">AU-</text>
<text x="2450" y="2367" textLength="562" lengthAdjust="spacingAndGlyphs">HAIDHAUSEN</text>
</g>
<g class="inter">
<text x="1484" y="2070" font-size="237" font-weight="600" fill="#3c3c3c" stroke="#fff" stroke-opacity=".7" stroke-width="18" textLength="860">Munich</text>
<text x="1084" y="2348" font-size="87" font-weight="600" fill="#ff559d" stroke="#fff" stroke-opacity=".8" stroke-width="14" textLength="682">Theresienwiese</text>
<text x="1105" y="15" font-size="84" font-weight="600" fill="#23991f" stroke="#fff" stroke-opacity=".7" stroke-width="14" textLength="540">Olympiapark</text>
<text transform="translate(3183 716) rotate(-58)" font-size="84" font-weight="600" fill="#468fd6" stroke="#fff" stroke-opacity=".6" stroke-width="16" textLength="168" lengthAdjust="spacingAndGlyphs">Isar</text>
<text x="218" y="2623" font-size="136" fill="#000" fill-opacity=".6" font-weight="500" textLength="350" lengthAdjust="spacingAndGlyphs">Maps</text>
<text x="652" y="2612" font-size="80" fill="#000" fill-opacity=".52" font-weight="500" textLength="222">Legal</text>
</g>
<path d="M655 2620H748V2630H655ZM800 2620H876V2630H800ZM765 2620H785V2630H765Z" fill="#000" fill-opacity=".5"/>
<path d="M163 2545Q162 2523 186 2513Q188 2535 163 2545ZM164 2554C175 2549 194 2543 206 2561C186 2573 190 2600 208 2607C199 2629 187 2625 183 2624C170 2618 161 2618 150 2624C132 2631 118 2596 121 2577C124 2552 145 2546 164 2554Z" fill="#000" fill-opacity=".6"/>
<!-- place markers -->
<circle cx="1017" cy="-20" r="58" fill="#2ca524"/>
<path d="M3273 205Q3262 208 3262 222V275Q3262 288 3273 290Z" fill="#fff" fill-opacity=".65"/>
<g transform="translate(3192 243)"><circle r="57" fill="url(#gPark)"/><path fill="#fff" d="M-4 26V8Q-12 14-19 8Q-29 4-25-7Q-24-16-15-17Q-12-27 0-29Q12-27 15-17Q24-16 25-7Q29 4 19 8Q12 14 4 8V26H10V29H-10V26Z"/></g>
<g transform="translate(1258 1780)"><rect width="125" height="125" rx="16" fill="url(#gRail)" stroke="#1e62dc" stroke-width="3"/><path fill="#fff" fill-rule="evenodd" d="M32 24Q34 17 62 17Q91 17 93 24V78Q93 88 83 89L95 107H87L78 96H47L38 107H29L42 89Q32 88 32 78ZM50 23V28H75V23ZM38 36V59H87V36ZM39 69V76H48V69ZM77 69V76H86V69ZM54 69V76H71V69Z"/></g>
<g transform="translate(1008 2313)"><circle r="57" fill="url(#gFair)"/><g fill="none" stroke="#fff" stroke-width="4"><circle r="27"/><path d="M0-22V22M-22 0H22M-16-16 16 16M-16 16 16-16M-9 35 0 3 9 35M-21 36H21"/></g><g fill="#fff"><circle r="4"/><circle cy="-32" r="5"/><circle cx="23" cy="-23" r="5"/><circle cx="-23" cy="-23" r="5"/><circle cx="32" r="5"/><circle cx="-32" r="5"/><circle cx="23" cy="23" r="5"/><circle cx="-23" cy="23" r="5"/></g></g>
</svg>
<div class="home-bar mx-auto flex-shrink-0"></div>
</main>
</body>
</html>
